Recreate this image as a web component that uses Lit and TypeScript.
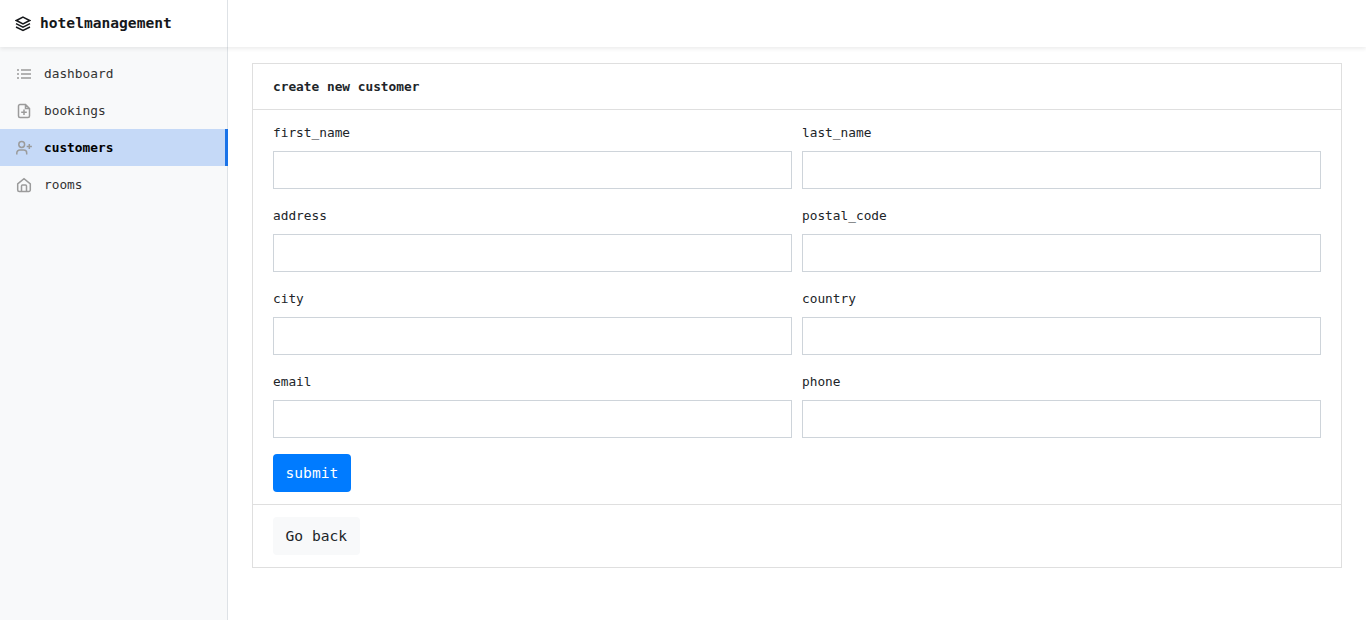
import { LitElement, html, css, svg } from "lit";
import { customElement, state } from "lit/decorators.js";

const icons = {
  layers: svg`<path d="M8 1.2 14.600 4.500 8 7.800 1.400 4.500Z"/><path d="M1 7.700 8 11.200 15 7.700"/><path d="M1 11 8 14.500 15 11"/>`,
  dashboard: svg`<path d="M1 4h2M1 8h2M1 12h2M5 4h10M5 8h10M5 12h10" stroke-width="1.700"/>`,
  bookings: svg`<path d="M9.500 1.500H4A1.500 1.500 0 0 0 2.500 3v10A1.500 1.500 0 0 0 4 14.500h8a1.500 1.500 0 0 0 1.500-1.500V5.500ZM9.500 1.500v4h4M8 6.500v5.500M5.200 9.300h5.600"/>`,
  customers: svg`<circle cx="5.700" cy="4.500" r="2.900"/><path d="M.800 14.500V13a3 3 0 0 1 3-3h3.900a3 3 0 0 1 3 3v1.500M13.300 4v5M10.700 6.500h5.200"/>`,
  rooms: svg`<path d="M1.700 6.800 8 1.700l6.300 5.100V13a1.500 1.500 0 0 1-1.500 1.500H3.200A1.500 1.500 0 0 1 1.700 13ZM5.500 14.500V9a1 1 0 0 1 1-1h3a1 1 0 0 1 1 1v5.500"/>`,
};

@customElement("app-root")
export class AppRoot extends LitElement {
  @state() active = "customers";

  static styles = css`
    :host { display: grid; grid-template: 47px 573px / 228px 1fr; height: 620px; overflow: hidden; background: #fff; color: #212529; font: 12.8px/21px "DejaVu Sans Mono", "Liberation Mono", monospace; }
    * { box-sizing: border-box; }
    svg { display: block; width: 16px; height: 16px; fill: none; stroke: currentColor; stroke-width: 1.500; flex: none; }
    .top { grid-column: 1 / 3; display: flex; box-shadow: 0 2px 4px rgba(0,0,0,.075); z-index: 1; }
    .brand { width: 228px; display: flex; align-items: center; gap: 9px; padding-left: 15px; border-right: 1px solid #dee2e6; color: #16181b; font-size: 14.6px; font-weight: 700; }
    .brand span { padding-bottom: 2px; }
    .side { background: #f8f9fa; border-right: 1px solid #dee2e6; padding-top: 8px; }
    .item { display: flex; align-items: center; gap: 12px; height: 37px; padding-left: 16px; color: #333; text-decoration: none; }
    .item svg { color: #9b9b9b; }
    .item.active { background: #c5d9f7; color: #000; font-weight: 700; border-right: 3px solid #1a73e8; margin-right: -1px; }
    .main { padding: 16px 24px; }
    .card { border: 1px solid #dfdfdf; }
    .head { height: 46px; padding: 12px 20px; border-bottom: 1px solid #dfdfdf; font-weight: 700; }
    .form { padding: 12px 20px; }
    .grid { display: grid; grid-template-columns: 1fr 1fr; column-gap: 10px; row-gap: 16px; margin-bottom: 16px; }
    .label { display: block; height: 21px; margin-bottom: 8px; }
    .input { display: block; width: 100%; height: 38px; border: 1px solid #ced4da; border-radius: 0; background: #fff; padding: 6px 12px; font: inherit; outline: none; }
    .btn { display: block; height: 38px; border: 0; border-radius: 4px; padding: 0 12.500px; font: 14.620px/24px "DejaVu Sans Mono", "Liberation Mono", monospace; }
    .primary { background: #007bff; color: #fff; }
    .light { background: #f8f9fa; color: #212529; }
    .foot { padding: 12px 20px; border-top: 1px solid #dfdfdf; }
  `;

  render() {
    return html`
      <header class="top"><div class="brand"><svg viewBox="0 0 16 16">${icons.layers}</svg><span>hotelmanagement</span></div></header>
      <nav class="side">
        ${(["dashboard", "bookings", "customers", "rooms"] as const).map(
          (n) => html`<a class="item ${n === this.active ? "active" : ""}" @click=${() => (this.active = n)}><svg viewBox="0 0 16 16">${icons[n]}</svg><span>${n}</span></a>`
        )}
      </nav>
      <main class="main">
        <section class="card">
          <div class="head">create new customer</div>
          <div class="form">
            <div class="grid">
              ${["first_name", "last_name", "address", "postal_code", "city", "country", "email", "phone"].map(
                (f) => html`<div><label class="label" for=${f}>${f}</label><input class="input" id=${f} /></div>`
              )}
            </div>
            <button class="btn primary">submit</button>
          </div>
          <div class="foot"><button class="btn light">Go back</button></div>
        </section>
      </main>`;
  }
}
